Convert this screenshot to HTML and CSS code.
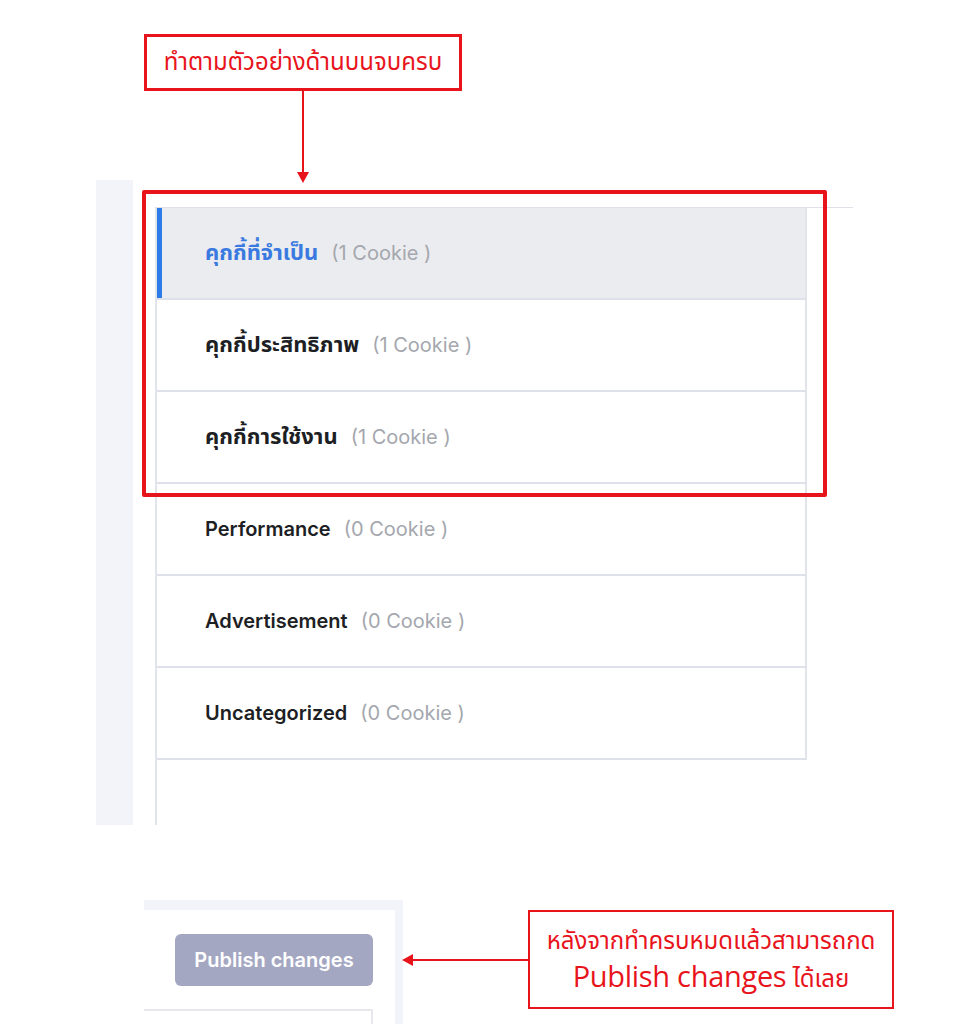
FILE: index.html
```html
<!DOCTYPE html>
<html lang="th">
<head>
<meta charset="utf-8">
<title>Cookie categories</title>
<link rel="stylesheet" href="styles.css">
</head>
<body>
<div class="page">
  <section class="shot-top">
    <div class="strip"></div>
    <div class="content">
      <div class="rule"></div>
      <div class="list">
        <div class="item active"><span class="label th">คุกกี้ที่จำเป็น</span><span class="count">(1 Cookie )</span></div>
        <div class="item"><span class="label th">คุกกี้ประสิทธิภาพ</span><span class="count">(1 Cookie )</span></div>
        <div class="item"><span class="label th">คุกกี้การใช้งาน</span><span class="count">(1 Cookie )</span></div>
        <div class="item"><span class="label">Performance</span><span class="count">(0 Cookie )</span></div>
        <div class="item"><span class="label">Advertisement</span><span class="count">(0 Cookie )</span></div>
        <div class="item"><span class="label">Uncategorized</span><span class="count">(0 Cookie )</span></div>
      </div>
    </div>
  </section>

  <section class="shot-bottom">
    <div class="frame">
      <div class="btn-row"><button class="publish" type="button">Publish changes</button></div>
      <div class="field"></div>
    </div>
  </section>

  <div class="note note-top">ทำตามตัวอย่างด้านบนจบครบ</div>
  <div class="arrow-down"></div>
  <div class="highlight"></div>

  <div class="note note-bottom">
    <div class="l1">หลังจากทำครบหมดแล้วสามารถกด</div>
    <div class="l2"><span class="big">Publish changes</span> <span class="small">ได้เลย</span></div>
  </div>
  <div class="arrow-left"></div>
</div>
</body>
</html>
```

FILE: styles.css
```css
* { box-sizing: border-box; }
html, body { margin: 0; padding: 0; background: #fff; }
body { font-family: Inter, "Noto Sans Thai", "Noto Sans", sans-serif; }

.page { position: relative; width: 971px; height: 1024px; overflow: hidden; }

/* top UI screenshot */
.shot-top {
  display: flex;
  margin-top: 180px;
  margin-left: 96px;
  height: 645px;
}
.strip { width: 37px; background: #f3f4f9; }
.content {
  margin-left: 22px;
  padding-top: 27px;
  display: flex;
  flex-direction: column;
}
.rule { width: 698px; height: 1px; background: #dfe1e8; }
.list {
  width: 652px;
  flex: 1;
  border-left: 2px solid #e2e4ec;
}
.item {
  height: 92px;
  display: flex;
  align-items: center;
  padding-left: 48px;
  border-bottom: 2px solid #dfe1ea;
  border-right: 2px solid #e2e4ec;
  gap: 13px;
  font-size: 20px;
}
.item.active {
  background: #ebecef;
  box-shadow: inset 5px 0 0 #2d7be8;
}
.label { font-weight: 600; color: #1d1f24; }
.label.th { font-size: 22px; font-weight: 700; }
.item.active .label { color: #3a7ae0; }
.count { color: #a4a7ae; font-weight: 400; }

/* bottom UI screenshot */
.shot-bottom {
  margin-top: 75px;
  margin-left: 144px;
  width: 259px;
  height: 124px;
  background: #f3f4f9;
  padding: 10px 8px 0 0;
}
.frame { background: #fff; height: 100%; display: flex; flex-direction: column; }
.btn-row { padding: 24px 0 0 31px; }
.publish {
  width: 198px;
  height: 52px;
  border: 0;
  border-radius: 6px;
  background: #a4a7c2;
  color: #fff;
  font-family: Inter, sans-serif;
  font-weight: 600;
  font-size: 20px;
  padding: 0;
}
.field {
  margin-top: 23px;
  width: 229px;
  flex: 1;
  border-top: 2px solid #e6e8ee;
  border-right: 2px solid #e6e8ee;
}

/* annotations */
.note {
  position: absolute;
  border: 3px solid #e8141c;
  color: #e8141c;
  background: #fff;
  font-family: "Noto Sans Thai", "Open Sans", sans-serif;
}
.note-top {
  left: 144px; top: 34px; width: 318px; height: 57px;
  font-size: 24px;
  line-height: 1;
  display: flex; align-items: center; justify-content: center;
}
.arrow-down {
  position: absolute;
  left: 302px; top: 91px; width: 2px; height: 82px;
  background: #e8141c;
}
.arrow-down::after {
  content: "";
  position: absolute;
  left: -5px; bottom: -10px;
  border-left: 6px solid transparent;
  border-right: 6px solid transparent;
  border-top: 11px solid #e8141c;
}
.highlight {
  position: absolute;
  left: 142px; top: 190px; width: 685px; height: 307px;
  border: 4px solid #e8141c;
  border-radius: 2px;
}
.note-bottom {
  left: 528px; top: 910px; width: 366px; height: 99px;
  border-width: 2px;
  display: flex; flex-direction: column; align-items: center; justify-content: center;
}
.note-bottom .l1 { font-size: 24px; height: 32px; line-height: 32px; }
.note-bottom .l2 { font-size: 24px; height: 36px; line-height: 36px; }
.note-bottom .big { font-size: 29px; font-family: "Open Sans", sans-serif; letter-spacing: -0.3px; }
.arrow-left {
  position: absolute;
  left: 410px; top: 959px; width: 118px; height: 2px;
  background: #e8141c;
}
.arrow-left::before {
  content: "";
  position: absolute;
  left: -8px; top: -5px;
  border-top: 6px solid transparent;
  border-bottom: 6px solid transparent;
  border-right: 11px solid #e8141c;
}
```
